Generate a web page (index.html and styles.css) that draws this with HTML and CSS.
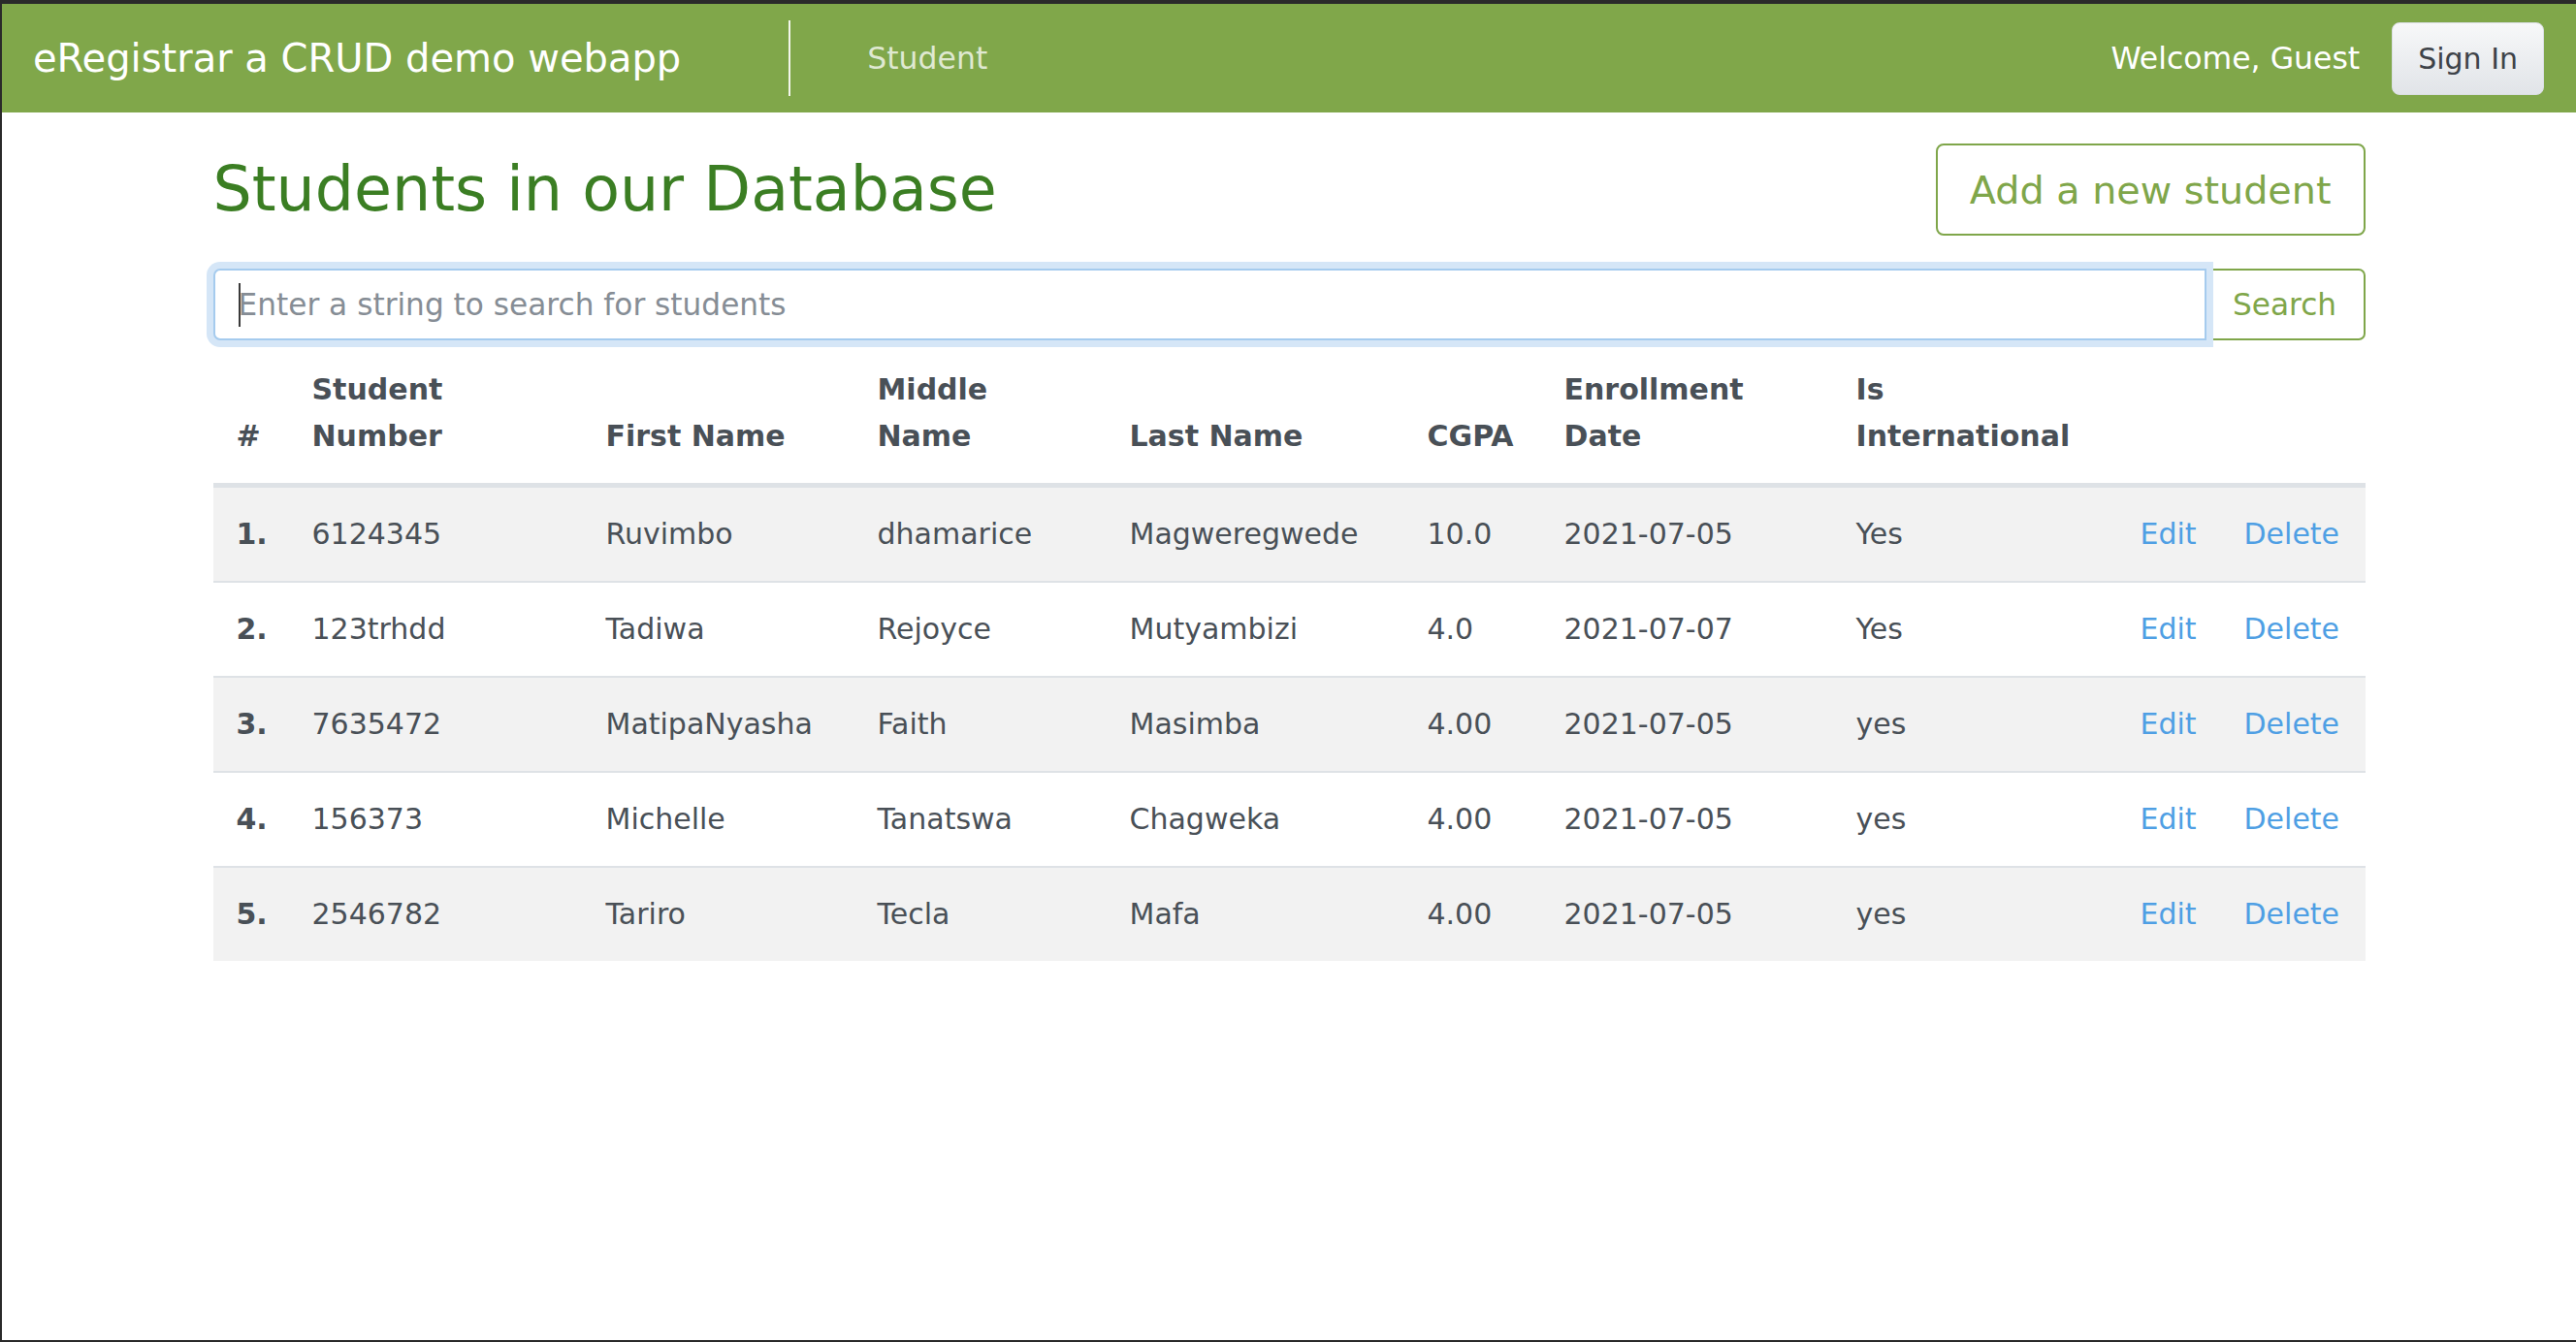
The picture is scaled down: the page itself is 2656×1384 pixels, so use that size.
FILE: index.html
```html
<!DOCTYPE html>
<html lang="en">
<head>
<meta charset="utf-8">
<title>eRegistrar</title>
<link rel="stylesheet" href="styles.css">
</head>
<body>
<div class="frame">
  <header class="navbar">
    <a class="brand" href="#">eRegistrar a CRUD demo webapp</a>
    <nav class="nav">
      <a class="nav-link" href="#">Student</a>
    </nav>
    <div class="nav-right">
      <span class="welcome">Welcome, Guest</span>
      <button class="btn-signin" type="button">Sign In</button>
    </div>
  </header>

  <main class="container">
    <div class="title-row">
      <h1 class="page-title">Students in our Database</h1>
      <a class="btn-add" href="#">Add a new student</a>
    </div>

    <form class="search-group">
      <div class="search-field">
        <input class="search-input" type="text" placeholder="Enter a string to search for students">
        <span class="caret"></span>
      </div>
      <button class="btn-search" type="button">Search</button>
    </form>

    <table class="students">
      <thead>
        <tr>
          <th class="c-num">#</th>
          <th class="c-sn">Student<br>Number</th>
          <th class="c-fn">First Name</th>
          <th class="c-mn">Middle<br>Name</th>
          <th class="c-ln">Last Name</th>
          <th class="c-gpa">CGPA</th>
          <th class="c-date">Enrollment<br>Date</th>
          <th class="c-int">Is<br>International</th>
          <th class="c-edit"></th>
          <th class="c-del"></th>
        </tr>
      </thead>
      <tbody>
        <tr>
          <td class="idx">1.</td><td>6124345</td><td>Ruvimbo</td><td>dhamarice</td><td>Magweregwede</td><td>10.0</td><td>2021-07-05</td><td>Yes</td><td><a class="link" href="#">Edit</a></td><td><a class="link" href="#">Delete</a></td>
        </tr>
        <tr>
          <td class="idx">2.</td><td>123trhdd</td><td>Tadiwa</td><td>Rejoyce</td><td>Mutyambizi</td><td>4.0</td><td>2021-07-07</td><td>Yes</td><td><a class="link" href="#">Edit</a></td><td><a class="link" href="#">Delete</a></td>
        </tr>
        <tr>
          <td class="idx">3.</td><td>7635472</td><td>MatipaNyasha</td><td>Faith</td><td>Masimba</td><td>4.00</td><td>2021-07-05</td><td>yes</td><td><a class="link" href="#">Edit</a></td><td><a class="link" href="#">Delete</a></td>
        </tr>
        <tr>
          <td class="idx">4.</td><td>156373</td><td>Michelle</td><td>Tanatswa</td><td>Chagweka</td><td>4.00</td><td>2021-07-05</td><td>yes</td><td><a class="link" href="#">Edit</a></td><td><a class="link" href="#">Delete</a></td>
        </tr>
        <tr>
          <td class="idx">5.</td><td>2546782</td><td>Tariro</td><td>Tecla</td><td>Mafa</td><td>4.00</td><td>2021-07-05</td><td>yes</td><td><a class="link" href="#">Edit</a></td><td><a class="link" href="#">Delete</a></td>
        </tr>
      </tbody>
    </table>
  </main>
</div>
</body>
</html>
```
FILE: styles.css
```css
* { box-sizing: border-box; }

html, body {
  margin: 0;
  padding: 0;
  background: #ffffff;
}

body {
  font-family: "DejaVu Sans", "Noto Sans", sans-serif;
  color: #495057;
}

.frame {
  height: 1384px;
  border-top: 4px solid #2a2a2a;
  border-left: 2px solid #2a2a2a;
  border-bottom: 2px solid #2a2a2a;
  background: #ffffff;
}

/* ---------- navbar ---------- */
.navbar {
  display: flex;
  align-items: center;
  height: 112px;
  padding: 0 33px 0 32px;
  background: #80a74a;
}

.brand {
  font-size: 40px;
  color: #ffffff;
  text-decoration: none;
  margin-right: 111px;
  white-space: nowrap;
}

.nav {
  display: flex;
  align-items: center;
  height: 78px;
  border-left: 2px solid rgba(255, 255, 255, 0.9);
  padding-left: 79px;
}

.nav-link {
  font-size: 31.5px;
  color: rgba(255, 255, 255, 0.75);
  text-decoration: none;
}

.nav-right {
  margin-left: auto;
  display: flex;
  align-items: center;
  gap: 33px;
}

.welcome {
  font-size: 31.5px;
  color: #ffffff;
}

.btn-signin {
  height: 75px;
  padding: 0 26px;
  font-family: inherit;
  font-size: 30px;
  color: #3e4349;
  background: linear-gradient(#f7f8f9, #e1e4e8);
  border: 1px solid #dadee2;
  border-radius: 8px;
}

/* ---------- main ---------- */
.container {
  width: 2219px;
  margin: 0 auto;
}

.title-row {
  display: flex;
  align-items: center;
  justify-content: space-between;
  padding-top: 32px;
  margin-bottom: 34px;
}

.page-title {
  margin: 0;
  font-size: 63.4px;
  font-weight: normal;
  line-height: 1.2;
  color: #3b7e23;
}

.btn-add {
  display: flex;
  align-items: center;
  height: 95px;
  padding: 0 33px;
  font-size: 39.7px;
  color: #7fa64a;
  text-decoration: none;
  border: 2px solid #7fa64a;
  border-radius: 8px;
  white-space: nowrap;
}

/* ---------- search ---------- */
.search-group {
  display: flex;
  height: 74px;
  margin: 0;
}

.search-field {
  position: relative;
  flex: 1;
  z-index: 1;
}

.search-input {
  width: 100%;
  height: 74px;
  padding: 0 24px;
  font-family: inherit;
  font-size: 31.2px;
  color: #495057;
  border: 2px solid #a5cbee;
  border-radius: 7px 0 0 7px;
  box-shadow: 0 0 0 7px #d5e6f7;
  outline: none;
  background: #ffffff;
}

.search-input::placeholder {
  color: #868d95;
}

.caret {
  position: absolute;
  left: 26px;
  top: 15px;
  width: 2px;
  height: 45px;
  background: #3a3a3a;
}

.btn-search {
  width: 166px;
  height: 74px;
  margin-left: -2px;
  font-family: inherit;
  font-size: 31.2px;
  color: #7fa64a;
  background: #ffffff;
  border: 2px solid #7fa64a;
  border-radius: 0 7px 7px 0;
}

/* ---------- table ---------- */
.students {
  width: 2219px;
  table-layout: fixed;
  border-collapse: separate;
  border-spacing: 0;
  font-size: 30px;
  line-height: 48px;
  color: #495057;
}

.students th,
.students td {
  padding: 24px;
  text-align: left;
  white-space: nowrap;
}

.students th {
  padding-top: 27px;
  vertical-align: bottom;
  font-weight: bold;
  border-bottom: 3px solid #dee2e6;
}

.students td {
  vertical-align: top;
  border-top: 2px solid #dee2e6;
}

.students tbody tr:nth-child(odd) td {
  background: #f2f2f2;
}

.students td.idx {
  font-weight: bold;
}

.c-num { width: 78px; }
.c-sn { width: 303px; }
.c-fn { width: 280px; }
.c-mn { width: 260px; }
.c-ln { width: 307px; }
.c-gpa { width: 141px; }
.c-date { width: 301px; }
.c-int { width: 293px; }
.c-edit { width: 107px; }
.c-del { width: 149px; }

.link {
  color: #4f9fe4;
  text-decoration: none;
}
```
